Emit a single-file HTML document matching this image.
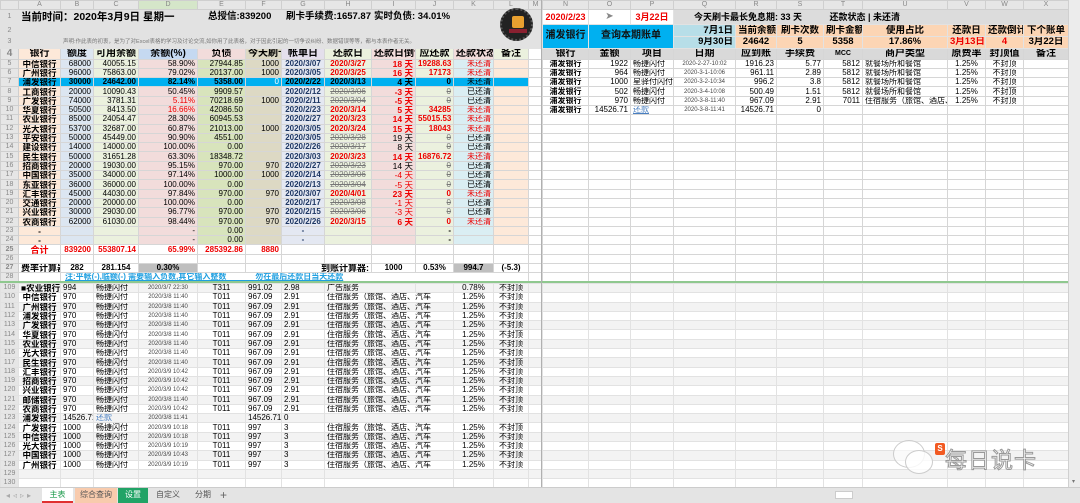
<!DOCTYPE html>
<html><head><meta charset="utf-8"><style>
*{box-sizing:border-box;margin:0;padding:0}
body{width:1080px;height:503px;overflow:hidden;background:#fff;font-family:"Liberation Sans","Noto Sans CJK SC",sans-serif;font-size:8px;color:#000;position:relative}
table{border-collapse:collapse;table-layout:fixed;position:absolute;left:0;top:0;width:1068px}
td{border:1px solid #d6d6d6;white-space:nowrap;overflow:hidden;padding:0 2px;line-height:8px;height:9.3px}
tr.h td{height:9px;background:#e6e6e6;color:#888;text-align:center;font-size:7px;border-color:#cfcfcf}
td.rn{background:#e6e6e6;color:#888;text-align:center;font-size:7px;padding:0;border-color:#cfcfcf}
.r{text-align:right}.c{text-align:center}.b{font-weight:bold}.red{color:#e00}
.top td{background:#e2e2e2;border-color:#e2e2e2}
tr.d td:nth-child(2){background:#fde9d9;font-weight:bold;text-align:center;font-size:8.5px}
tr.d td:nth-child(3){background:#dce6f1;text-align:right}
tr.d td:nth-child(4){background:#ebf1de;text-align:right}
tr.d td:nth-child(5){background:#f2dcdb;text-align:right}
tr.d td:nth-child(6){background:#d8e4bc;text-align:right}
tr.d td:nth-child(7){background:#ddd9c4;text-align:right;border-right:1px dashed #888}
tr.d td:nth-child(8){background:#e4e8f2;text-align:center;font-weight:bold;color:#1f3864}
tr.d td:nth-child(9){background:#ebf1de;text-align:center;font-weight:bold}
tr.d td:nth-child(10){background:#f2dcdb;text-align:right;font-weight:bold;font-size:8.5px}
tr.d td:nth-child(11){background:#ebf1de;text-align:right;font-weight:bold}
tr.d td:nth-child(12){background:#daeef3;text-align:right}
tr.d td:nth-child(13){background:#fde9d9}
tr.hl td:nth-child(n+2):nth-child(-n+13){background:#00b0f0!important;color:#000}
.s{color:#777!important;text-decoration:line-through;font-weight:normal!important}
.hd td{font-weight:bold;font-size:10px;text-align:center;height:11px}
.lo td{border-color:#e2e2e2}
.lo td:nth-child(2){font-weight:bold;text-align:center;font-size:8.5px}
.lo td:nth-child(5){font-size:6px;text-align:center;color:#444}
.lo td:nth-child(6){text-align:center}
.alt td{background:#f3f3f3}
.alt td.rn{background:#e6e6e6}
.pe{background:#fcd5b4!important;font-weight:bold;font-size:9.5px;text-align:center}
.bl{background:#00b0f0!important;font-weight:bold;font-size:10px;text-align:center;color:#111}
.lb{background:#b7dee8!important;font-weight:bold;font-size:9.5px;text-align:right}
.tiny{font-size:6px;color:#444;text-align:center}
</style></head><body>
<table>
<colgroup>
<col style="width:18px"><col style="width:42px"><col style="width:33px"><col style="width:45px"><col style="width:59px"><col style="width:48px"><col style="width:36px"><col style="width:43px"><col style="width:47px"><col style="width:44px"><col style="width:38px"><col style="width:40px"><col style="width:35px"><col style="width:14px"><col style="width:46px"><col style="width:42px"><col style="width:43px"><col style="width:62px"><col style="width:41px"><col style="width:47px"><col style="width:39px"><col style="width:85px"><col style="width:38px"><col style="width:38px"><col style="width:45px">
</colgroup>
<tr class="h"><td></td><td>A</td><td>B</td><td>C</td><td style="background:#d5e6c9">D</td><td>E</td><td>F</td><td>G</td><td>H</td><td>I</td><td>J</td><td>K</td><td>L</td><td>M</td><td>N</td><td>O</td><td>P</td><td>Q</td><td>R</td><td>S</td><td>T</td><td>U</td><td>V</td><td>W</td><td>X</td></tr>
<tr class="top" style="height:15px"><td class="rn">1</td><td colspan="4" class="b" style="font-size:10.5px;height:15px">当前时间：2020年3月9日 星期一</td><td colspan="2" class="b" style="font-size:9.5px;padding-left:10px">总授信:839200</td><td colspan="2" class="b" style="font-size:9.5px;padding-left:4px">刷卡手续费:1657.87</td><td colspan="3" class="b" style="font-size:9.5px">实时负债: 34.01%</td><td rowspan="3" style="position:relative;overflow:visible"><div style="position:absolute;left:6px;top:-2px;width:33px;height:33px;border-radius:50%;background:#222;border:2px dotted #555"><div style="position:absolute;left:10px;top:6px;width:12px;height:12px;background:#e8a030;border-radius:2px"></div><div style="position:absolute;left:7px;top:19px;width:18px;height:4px;background:#8a2030"></div></div></td><td></td><td class="b red c" style="background:#fff;border-color:#ddd;font-size:9px">2020/2/23</td><td class="c" style="background:#fff;color:#888;font-size:10px">➤</td><td class="b red c" style="background:#fff;font-size:9px">3月22日</td><td colspan="8" class="b" style="background:#dcdcdc;font-size:9px;padding-left:20px">今天刷卡最长免息期: 33 天 &nbsp; &nbsp; &nbsp; &nbsp; &nbsp; 还款状态 | 未还清</td></tr>
<tr class="top" style="height:12px"><td class="rn">2</td><td colspan="11"></td><td></td><td rowspan="2" class="bl">浦发银行</td><td rowspan="2" colspan="2" class="bl">查询本期账单</td><td class="lb">7月1日</td><td class="pe">当前余额</td><td class="pe">刷卡次数</td><td class="pe">刷卡金额</td><td class="pe">使用占比</td><td class="pe">还款日</td><td class="pe">还款倒计</td><td class="pe">下个账单</td></tr>
<tr class="top" style="height:11.5px"><td class="rn">3</td><td colspan="11" style="font-size:5.5px;color:#777;padding-left:44px">声明:作此表的初衷，是为了对Excel表格的学习及讨论交流,如你用了此表格，对于因此引起的一切争议纠纷、数据错误等等，都与本表作者无关。</td><td></td><td class="lb">9月30日</td><td class="pe">24642</td><td class="pe">5</td><td class="pe">5358</td><td class="pe">17.86%</td><td class="pe red">3月13日</td><td class="pe red">4</td><td class="pe">3月22日</td></tr>
<tr class="hd"><td class="rn">4</td><td style="background:#fde9d9">银行</td><td style="background:#dce6f1">额度</td><td style="background:#ebf1de">可用余额</td><td style="background:#c5d9f1">余额(%)</td><td style="background:#f2dcdb">负债</td><td style="background:#ddd9c4">今天刷卡</td><td style="background:#e4dfec">帐单日</td><td style="background:#ebf1de">还款日</td><td style="background:#f2dcdb">还款日倒计</td><td style="background:#ebf1de">应还款</td><td style="background:#f2dcdb">还款状态</td><td style="background:#ebf1de">备注</td><td></td><td style="background:#d9d9d9">银行</td><td style="background:#d9d9d9">金额</td><td style="background:#d9d9d9">项目</td><td style="background:#d9d9d9">日期</td><td style="background:#d9d9d9">应到账</td><td style="background:#d9d9d9">手续费</td><td style="background:#d9d9d9;font-size:7px">MCC</td><td style="background:#d9d9d9">商户类型</td><td style="background:#d9d9d9">原费率</td><td style="background:#d9d9d9">封顶值</td><td style="background:#d9d9d9">备注</td></tr>
<tr class="d"><td class="rn">5</td><td>中信银行</td><td>68000</td><td>40055.15</td><td>58.90%</td><td>27944.85</td><td>1000</td><td>2020/3/07</td><td class="red">2020/3/27</td><td class="red">18 天</td><td class="red">19288.63</td><td class="red c">未还清</td><td></td><td></td><td class="b c">浦发银行</td><td class="r">1922</td><td>畅捷闪付</td><td class="tiny">2020-2-27-10:02</td><td class="r">1916.23</td><td class="r">5.77</td><td class="r">5812</td><td>就餐场所和餐馆</td><td class="c">1.25%</td><td class="c">不封顶</td><td></td></tr>
<tr class="d"><td class="rn">6</td><td>广州银行</td><td>96000</td><td>75863.00</td><td>79.02%</td><td>20137.00</td><td>1000</td><td>2020/3/05</td><td class="red">2020/3/25</td><td class="red">16 天</td><td class="red">17173</td><td class="red c">未还清</td><td></td><td></td><td class="b c">浦发银行</td><td class="r">964</td><td>畅捷闪付</td><td class="tiny">2020-3-1-10:06</td><td class="r">961.11</td><td class="r">2.89</td><td class="r">5812</td><td>就餐场所和餐馆</td><td class="c">1.25%</td><td class="c">不封顶</td><td></td></tr>
<tr class="d hl"><td class="rn">7</td><td>浦发银行</td><td class="b">30000</td><td class="b">24642.00</td><td class="b">82.14%</td><td class="b">5358.00</td><td style="color:#fff">0</td><td>2020/2/22</td><td class="red">2020/3/13</td><td class="red">4 天</td><td class="red">0</td><td class="red c">未还清</td><td></td><td></td><td class="b c">浦发银行</td><td class="r">1000</td><td>星驿付闪付</td><td class="tiny">2020-3-2-10:34</td><td class="r">996.2</td><td class="r">3.8</td><td class="r">5812</td><td>就餐场所和餐馆</td><td class="c">1.25%</td><td class="c">不封顶</td><td></td></tr>
<tr class="d"><td class="rn">8</td><td>工商银行</td><td>20000</td><td>10090.43</td><td>50.45%</td><td>9909.57</td><td></td><td>2020/2/12</td><td class="s">2020/3/06</td><td class="red">-3 天</td><td class="s">0</td><td class="c">已还清</td><td></td><td></td><td class="b c">浦发银行</td><td class="r">502</td><td>畅捷闪付</td><td class="tiny">2020-3-4-10:08</td><td class="r">500.49</td><td class="r">1.51</td><td class="r">5812</td><td>就餐场所和餐馆</td><td class="c">1.25%</td><td class="c">不封顶</td><td></td></tr>
<tr class="d"><td class="rn">9</td><td>广发银行</td><td>74000</td><td>3781.31</td><td class="red">5.11%</td><td>70218.69</td><td>1000</td><td>2020/2/11</td><td class="s">2020/3/04</td><td class="red">-5 天</td><td class="s">0</td><td class="c">已还清</td><td></td><td></td><td class="b c">浦发银行</td><td class="r">970</td><td>畅捷闪付</td><td class="tiny">2020-3-8-11:40</td><td class="r">967.09</td><td class="r">2.91</td><td class="r">7011</td><td>住宿服务（旅馆、酒店、汽</td><td class="c">1.25%</td><td class="c">不封顶</td><td></td></tr>
<tr class="d"><td class="rn">10</td><td>华夏银行</td><td>50500</td><td>8413.50</td><td class="red">16.66%</td><td>42086.50</td><td></td><td>2020/2/23</td><td class="red">2020/3/14</td><td class="red">5 天</td><td class="red">34285</td><td class="red c">未还清</td><td></td><td></td><td class="b c">浦发银行</td><td class="r">14526.71</td><td style="color:#4a7fc0;text-decoration:underline">还款</td><td class="tiny">2020-3-8-11:41</td><td class="r">14526.71</td><td class="r">0</td><td></td><td></td><td></td><td></td><td></td></tr>
<tr class="d"><td class="rn">11</td><td>农业银行</td><td>85000</td><td>24054.47</td><td>28.30%</td><td>60945.53</td><td></td><td>2020/2/27</td><td class="red">2020/3/23</td><td class="red">14 天</td><td class="red">55015.53</td><td class="red c">未还清</td><td></td><td></td><td></td><td></td><td></td><td></td><td></td><td></td><td></td><td></td><td></td><td></td><td></td></tr>
<tr class="d"><td class="rn">12</td><td>光大银行</td><td>53700</td><td>32687.00</td><td>60.87%</td><td>21013.00</td><td>1000</td><td>2020/3/05</td><td class="red">2020/3/24</td><td class="red">15 天</td><td class="red">18043</td><td class="red c">未还清</td><td></td><td></td><td></td><td></td><td></td><td></td><td></td><td></td><td></td><td></td><td></td><td></td><td></td></tr>
<tr class="d"><td class="rn">13</td><td>平安银行</td><td>50000</td><td>45449.00</td><td>90.90%</td><td>4551.00</td><td></td><td>2020/3/05</td><td class="s">2020/3/28</td><td style="font-weight:normal">19 天</td><td class="s">0</td><td class="c">已还清</td><td></td><td></td><td></td><td></td><td></td><td></td><td></td><td></td><td></td><td></td><td></td><td></td><td></td></tr>
<tr class="d"><td class="rn">14</td><td>建设银行</td><td>14000</td><td>14000.00</td><td>100.00%</td><td>0.00</td><td></td><td>2020/2/26</td><td class="s">2020/3/17</td><td style="font-weight:normal">8 天</td><td class="s">0</td><td class="c">已还清</td><td></td><td></td><td></td><td></td><td></td><td></td><td></td><td></td><td></td><td></td><td></td><td></td><td></td></tr>
<tr class="d"><td class="rn">15</td><td>民生银行</td><td>50000</td><td>31651.28</td><td>63.30%</td><td>18348.72</td><td></td><td>2020/3/03</td><td class="red">2020/3/23</td><td class="red">14 天</td><td class="red">16876.72</td><td class="red c">未还清</td><td></td><td></td><td></td><td></td><td></td><td></td><td></td><td></td><td></td><td></td><td></td><td></td><td></td></tr>
<tr class="d"><td class="rn">16</td><td>招商银行</td><td>20000</td><td>19030.00</td><td>95.15%</td><td>970.00</td><td>970</td><td>2020/2/27</td><td class="s">2020/3/23</td><td style="font-weight:normal">14 天</td><td class="s">0</td><td class="c">已还清</td><td></td><td></td><td></td><td></td><td></td><td></td><td></td><td></td><td></td><td></td><td></td><td></td><td></td></tr>
<tr class="d"><td class="rn">17</td><td>中国银行</td><td>35000</td><td>34000.00</td><td>97.14%</td><td>1000.00</td><td>1000</td><td>2020/2/14</td><td class="s">2020/3/06</td><td class="red" style="font-weight:normal">-4 天</td><td class="s">0</td><td class="c">已还清</td><td></td><td></td><td></td><td></td><td></td><td></td><td></td><td></td><td></td><td></td><td></td><td></td><td></td></tr>
<tr class="d"><td class="rn">18</td><td>东亚银行</td><td>36000</td><td>36000.00</td><td>100.00%</td><td>0.00</td><td></td><td>2020/2/13</td><td class="s">2020/3/04</td><td class="red" style="font-weight:normal">-5 天</td><td class="s">0</td><td class="c">已还清</td><td></td><td></td><td></td><td></td><td></td><td></td><td></td><td></td><td></td><td></td><td></td><td></td><td></td></tr>
<tr class="d"><td class="rn">19</td><td>汇丰银行</td><td>45000</td><td>44030.00</td><td>97.84%</td><td>970.00</td><td>970</td><td>2020/3/07</td><td class="red">2020/4/01</td><td class="red">23 天</td><td class="red">0</td><td class="red c">未还清</td><td></td><td></td><td></td><td></td><td></td><td></td><td></td><td></td><td></td><td></td><td></td><td></td><td></td></tr>
<tr class="d"><td class="rn">20</td><td>交通银行</td><td>20000</td><td>20000.00</td><td>100.00%</td><td>0.00</td><td></td><td>2020/2/17</td><td class="s">2020/3/08</td><td class="red" style="font-weight:normal">-1 天</td><td class="s">0</td><td class="c">已还清</td><td></td><td></td><td></td><td></td><td></td><td></td><td></td><td></td><td></td><td></td><td></td><td></td><td></td></tr>
<tr class="d"><td class="rn">21</td><td>兴业银行</td><td>30000</td><td>29030.00</td><td>96.77%</td><td>970.00</td><td>970</td><td>2020/2/15</td><td class="s">2020/3/06</td><td class="red" style="font-weight:normal">-3 天</td><td class="s">0</td><td class="c">已还清</td><td></td><td></td><td></td><td></td><td></td><td></td><td></td><td></td><td></td><td></td><td></td><td></td><td></td></tr>
<tr class="d"><td class="rn">22</td><td>农商银行</td><td>62000</td><td>61030.00</td><td>98.44%</td><td>970.00</td><td>970</td><td>2020/2/26</td><td class="red">2020/3/15</td><td class="red">6 天</td><td class="red">0</td><td class="red c">未还清</td><td></td><td></td><td></td><td></td><td></td><td></td><td></td><td></td><td></td><td></td><td></td><td></td><td></td></tr>
<tr class="d"><td class="rn">23</td><td>-</td><td></td><td></td><td>-</td><td>0.00</td><td></td><td>-</td><td></td><td></td><td>-</td><td></td><td></td><td></td><td></td><td></td><td></td><td></td><td></td><td></td><td></td><td></td><td></td><td></td><td></td></tr>
<tr class="d"><td class="rn">24</td><td>-</td><td></td><td></td><td>-</td><td>0.00</td><td></td><td>-</td><td></td><td></td><td>-</td><td></td><td></td><td></td><td></td><td></td><td></td><td></td><td></td><td></td><td></td><td></td><td></td><td></td><td></td></tr>
<tr class="b red"><td class="rn">25</td><td class="c" style="font-size:9px">合计</td><td class="r">839200</td><td class="r">553807.14</td><td class="r">65.99%</td><td class="r">285392.86</td><td class="r">8880</td><td></td><td></td><td></td><td></td><td></td><td></td><td></td><td></td><td></td><td></td><td></td><td></td><td></td><td></td><td></td><td></td><td></td><td></td></tr>
<tr><td class="rn">26</td><td></td><td></td><td></td><td></td><td></td><td></td><td></td><td></td><td></td><td></td><td></td><td></td><td></td><td></td><td></td><td></td><td></td><td></td><td></td><td></td><td></td><td></td><td></td><td></td></tr>
<tr class="b"><td class="rn">27</td><td style="font-size:9px">费率计算器:</td><td class="c">282</td><td class="c">281.154</td><td class="c" style="background:#bfbfbf">0.30%</td><td></td><td></td><td colspan="2" class="r" style="font-size:9px">到账计算器:</td><td class="c">1000</td><td class="c">0.53%</td><td class="c" style="background:#bfbfbf">994.7</td><td class="c">(-5.3)</td><td></td><td></td><td></td><td></td><td></td><td></td><td></td><td></td><td></td><td></td><td></td><td></td></tr>
<tr style="border-bottom:2px solid #8fc88f"><td class="rn">28</td><td></td><td colspan="11" style="color:#1f9fe0;text-decoration:underline;font-weight:bold;padding-left:4px">注:平帐(-),临额(-) 需要输入负数,其它输入整数 &nbsp; &nbsp; &nbsp; &nbsp; &nbsp; &nbsp; 勿在最后还款日当天还款</td><td></td><td></td><td></td><td></td><td></td><td></td><td></td><td></td><td></td><td></td><td></td><td></td></tr>
</table>
<table style="top:283px" class="lo">
<colgroup>
<col style="width:18px"><col style="width:42px"><col style="width:33px"><col style="width:45px"><col style="width:59px"><col style="width:48px"><col style="width:36px"><col style="width:43px"><col style="width:47px"><col style="width:44px"><col style="width:38px"><col style="width:40px"><col style="width:35px"><col style="width:14px"><col style="width:46px"><col style="width:42px"><col style="width:43px"><col style="width:62px"><col style="width:41px"><col style="width:47px"><col style="width:39px"><col style="width:85px"><col style="width:38px"><col style="width:38px"><col style="width:45px">
</colgroup>
<tr class="alt"><td class="rn">109</td><td>■农业银行</td><td>994</td><td>畅捷闪付</td><td>2020/3/7 22:30</td><td>T311</td><td>991.02</td><td>2.98</td><td colspan="2">广告服务</td><td></td><td class="c">0.78%</td><td class="c">不封顶</td><td></td><td></td><td></td><td></td><td></td><td></td><td></td><td></td><td></td><td></td><td></td><td></td></tr>
<tr><td class="rn">110</td><td>中信银行</td><td>970</td><td>畅捷闪付</td><td>2020/3/8 11:40</td><td>T011</td><td>967.09</td><td>2.91</td><td colspan="3">住宿服务（旅馆、酒店、汽车</td><td class="c">1.25%</td><td class="c">不封顶</td><td></td><td></td><td></td><td></td><td></td><td></td><td></td><td></td><td></td><td></td><td></td><td></td></tr>
<tr class="alt"><td class="rn">111</td><td>广州银行</td><td>970</td><td>畅捷闪付</td><td>2020/3/8 11:40</td><td>T011</td><td>967.09</td><td>2.91</td><td colspan="3">住宿服务（旅馆、酒店、汽车</td><td class="c">1.25%</td><td class="c">不封顶</td><td></td><td></td><td></td><td></td><td></td><td></td><td></td><td></td><td></td><td></td><td></td><td></td></tr>
<tr><td class="rn">112</td><td>浦发银行</td><td>970</td><td>畅捷闪付</td><td>2020/3/8 11:40</td><td>T011</td><td>967.09</td><td>2.91</td><td colspan="3">住宿服务（旅馆、酒店、汽车</td><td class="c">1.25%</td><td class="c">不封顶</td><td></td><td></td><td></td><td></td><td></td><td></td><td></td><td></td><td></td><td></td><td></td><td></td></tr>
<tr class="alt"><td class="rn">113</td><td>广发银行</td><td>970</td><td>畅捷闪付</td><td>2020/3/8 11:40</td><td>T011</td><td>967.09</td><td>2.91</td><td colspan="3">住宿服务（旅馆、酒店、汽车</td><td class="c">1.25%</td><td class="c">不封顶</td><td></td><td></td><td></td><td></td><td></td><td></td><td></td><td></td><td></td><td></td><td></td><td></td></tr>
<tr><td class="rn">114</td><td>华夏银行</td><td>970</td><td>畅捷闪付</td><td>2020/3/8 11:40</td><td>T011</td><td>967.09</td><td>2.91</td><td colspan="3">住宿服务（旅馆、酒店、汽车</td><td class="c">1.25%</td><td class="c">不封顶</td><td></td><td></td><td></td><td></td><td></td><td></td><td></td><td></td><td></td><td></td><td></td><td></td></tr>
<tr class="alt"><td class="rn">115</td><td>农业银行</td><td>970</td><td>畅捷闪付</td><td>2020/3/8 11:40</td><td>T011</td><td>967.09</td><td>2.91</td><td colspan="3">住宿服务（旅馆、酒店、汽车</td><td class="c">1.25%</td><td class="c">不封顶</td><td></td><td></td><td></td><td></td><td></td><td></td><td></td><td></td><td></td><td></td><td></td><td></td></tr>
<tr><td class="rn">116</td><td>光大银行</td><td>970</td><td>畅捷闪付</td><td>2020/3/8 11:40</td><td>T011</td><td>967.09</td><td>2.91</td><td colspan="3">住宿服务（旅馆、酒店、汽车</td><td class="c">1.25%</td><td class="c">不封顶</td><td></td><td></td><td></td><td></td><td></td><td></td><td></td><td></td><td></td><td></td><td></td><td></td></tr>
<tr class="alt"><td class="rn">117</td><td>民生银行</td><td>970</td><td>畅捷闪付</td><td>2020/3/8 11:40</td><td>T011</td><td>967.09</td><td>2.91</td><td colspan="3">住宿服务（旅馆、酒店、汽车</td><td class="c">1.25%</td><td class="c">不封顶</td><td></td><td></td><td></td><td></td><td></td><td></td><td></td><td></td><td></td><td></td><td></td><td></td></tr>
<tr><td class="rn">118</td><td>汇丰银行</td><td>970</td><td>畅捷闪付</td><td>2020/3/9 10:42</td><td>T011</td><td>967.09</td><td>2.91</td><td colspan="3">住宿服务（旅馆、酒店、汽车</td><td class="c">1.25%</td><td class="c">不封顶</td><td></td><td></td><td></td><td></td><td></td><td></td><td></td><td></td><td></td><td></td><td></td><td></td></tr>
<tr class="alt"><td class="rn">119</td><td>招商银行</td><td>970</td><td>畅捷闪付</td><td>2020/3/9 10:42</td><td>T011</td><td>967.09</td><td>2.91</td><td colspan="3">住宿服务（旅馆、酒店、汽车</td><td class="c">1.25%</td><td class="c">不封顶</td><td></td><td></td><td></td><td></td><td></td><td></td><td></td><td></td><td></td><td></td><td></td><td></td></tr>
<tr><td class="rn">120</td><td>兴业银行</td><td>970</td><td>畅捷闪付</td><td>2020/3/9 10:42</td><td>T011</td><td>967.09</td><td>2.91</td><td colspan="3">住宿服务（旅馆、酒店、汽车</td><td class="c">1.25%</td><td class="c">不封顶</td><td></td><td></td><td></td><td></td><td></td><td></td><td></td><td></td><td></td><td></td><td></td><td></td></tr>
<tr class="alt"><td class="rn">121</td><td>邮储银行</td><td>970</td><td>畅捷闪付</td><td>2020/3/8 11:40</td><td>T011</td><td>967.09</td><td>2.91</td><td colspan="3">住宿服务（旅馆、酒店、汽车</td><td class="c">1.25%</td><td class="c">不封顶</td><td></td><td></td><td></td><td></td><td></td><td></td><td></td><td></td><td></td><td></td><td></td><td></td></tr>
<tr><td class="rn">122</td><td>农商银行</td><td>970</td><td>畅捷闪付</td><td>2020/3/9 10:42</td><td>T011</td><td>967.09</td><td>2.91</td><td colspan="3">住宿服务（旅馆、酒店、汽车</td><td class="c">1.25%</td><td class="c">不封顶</td><td></td><td></td><td></td><td></td><td></td><td></td><td></td><td></td><td></td><td></td><td></td><td></td></tr>
<tr class="alt"><td class="rn">123</td><td>浦发银行</td><td>14526.71</td><td style="color:#4a7fc0">还款</td><td>2020/3/8 11:41</td><td></td><td>14526.71</td><td>0</td><td colspan="3"></td><td></td><td></td><td></td><td></td><td></td><td></td><td></td><td></td><td></td><td></td><td></td><td></td><td></td><td></td></tr>
<tr><td class="rn">124</td><td>广发银行</td><td>1000</td><td>畅捷闪付</td><td>2020/3/9 10:18</td><td>T011</td><td>997</td><td>3</td><td colspan="3">住宿服务（旅馆、酒店、汽车</td><td class="c">1.25%</td><td class="c">不封顶</td><td></td><td></td><td></td><td></td><td></td><td></td><td></td><td></td><td></td><td></td><td></td><td></td></tr>
<tr class="alt"><td class="rn">125</td><td>中信银行</td><td>1000</td><td>畅捷闪付</td><td>2020/3/9 10:18</td><td>T011</td><td>997</td><td>3</td><td colspan="3">住宿服务（旅馆、酒店、汽车</td><td class="c">1.25%</td><td class="c">不封顶</td><td></td><td></td><td></td><td></td><td></td><td></td><td></td><td></td><td></td><td></td><td></td><td></td></tr>
<tr><td class="rn">126</td><td>光大银行</td><td>1000</td><td>畅捷闪付</td><td>2020/3/9 10:19</td><td>T011</td><td>997</td><td>3</td><td colspan="3">住宿服务（旅馆、酒店、汽车</td><td class="c">1.25%</td><td class="c">不封顶</td><td></td><td></td><td></td><td></td><td></td><td></td><td></td><td></td><td></td><td></td><td></td><td></td></tr>
<tr class="alt"><td class="rn">127</td><td>中国银行</td><td>1000</td><td>畅捷闪付</td><td>2020/3/9 10:43</td><td>T011</td><td>997</td><td>3</td><td colspan="3">住宿服务（旅馆、酒店、汽车</td><td class="c">1.25%</td><td class="c">不封顶</td><td></td><td></td><td></td><td></td><td></td><td></td><td></td><td></td><td></td><td></td><td></td><td></td></tr>
<tr><td class="rn">128</td><td>广州银行</td><td>1000</td><td>畅捷闪付</td><td>2020/3/9 10:19</td><td>T011</td><td>997</td><td>3</td><td colspan="3">住宿服务（旅馆、酒店、汽车</td><td class="c">1.25%</td><td class="c">不封顶</td><td></td><td></td><td></td><td></td><td></td><td></td><td></td><td></td><td></td><td></td><td></td><td></td></tr>
<tr class="alt"><td class="rn">129</td><td></td><td></td><td></td><td></td><td></td><td></td><td></td><td colspan="3"></td><td></td><td></td><td></td><td></td><td></td><td></td><td></td><td></td><td></td><td></td><td></td><td></td><td></td><td></td></tr>
<tr><td class="rn">130</td><td></td><td></td><td></td><td></td><td></td><td></td><td></td><td colspan="3"></td><td></td><td></td><td></td><td></td><td></td><td></td><td></td><td></td><td></td><td></td><td></td><td></td><td></td><td></td></tr>
</table>
<div style="position:absolute;left:541px;top:0;width:1px;height:487px;background:#b0b0b0"></div>
<div style="position:absolute;left:1068px;top:0;width:12px;height:487px;background:#ececec;border-left:1px solid #d0d0d0"><div style="position:absolute;left:3px;top:478px;color:#777;font-size:6px">▾</div></div>
<div style="position:absolute;left:893px;top:440px;width:32px;height:28px;border:1.5px solid #ccc;border-radius:50%;background:rgba(255,255,255,.6)"></div>
<div style="position:absolute;left:905px;top:450px;width:28px;height:24px;border:1.5px solid #ccc;border-radius:50%;background:rgba(255,255,255,.8)"></div>
<div style="position:absolute;left:935px;top:443px;width:10px;height:12px;background:#f25a22;border-radius:2px;color:#fff;font-size:8px;line-height:12px;text-align:center;font-weight:bold">S</div>
<div style="position:absolute;left:945px;top:443px;font-size:22px;color:#fff;-webkit-text-stroke:1px #999;letter-spacing:1px">每日说卡</div>
<div style="position:absolute;left:0;top:487px;width:1080px;height:16px;background:#e4e4e4;border-top:1px solid #ccc;font-size:8px">
<span style="position:absolute;left:6px;top:3px;color:#aaa;letter-spacing:3px">◂◃▹▸</span>
<div style="position:absolute;left:42px;top:0;width:31px;height:15px;background:#fff;color:#1a9a4a;text-align:center;line-height:14px;border-bottom:2px solid #e03030">主表</div>
<div style="position:absolute;left:75px;top:0;width:42px;height:15px;background:#f8cbad;color:#555;text-align:center;line-height:14px">综合查询</div>
<div style="position:absolute;left:118px;top:0;width:30px;height:15px;background:#21a366;color:#fff;text-align:center;line-height:14px">设置</div>
<div style="position:absolute;left:150px;top:0;width:36px;height:15px;color:#555;text-align:center;line-height:14px">自定义</div>
<div style="position:absolute;left:188px;top:0;width:30px;height:15px;color:#555;text-align:center;line-height:14px">分期</div>
<div style="position:absolute;left:220px;top:0;color:#666;font-size:12px;line-height:14px">+</div>
<div style="position:absolute;left:835px;top:3px;width:18px;height:8px;background:#fff;border:1px solid #ccc"></div>
</div>
</body></html>
